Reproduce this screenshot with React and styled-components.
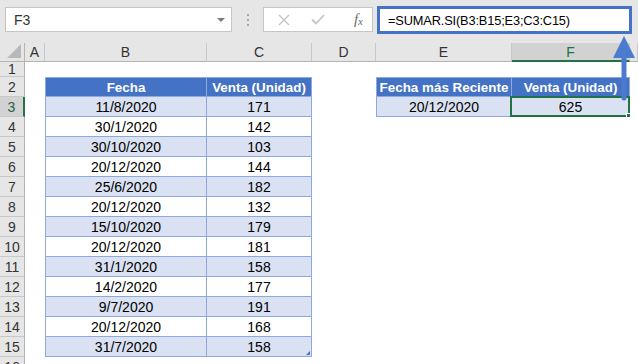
import React from 'react';
import styled, { createGlobalStyle } from 'styled-components';

const GlobalStyle = createGlobalStyle`
  html, body {
    margin: 0;
    padding: 0;
    background: #ffffff;
    overflow: hidden;
  }
  body {
    font-family: 'Liberation Sans', Arial, sans-serif;
    color: #000;
  }
`;

// the last column is only a sliver at the window edge, so it has no letter
const COLUMNS = ['A', 'B', 'C', 'D', 'E', 'F', ''];

const SALES = [
  ['11/8/2020', 171],
  ['30/1/2020', 142],
  ['30/10/2020', 103],
  ['20/12/2020', 144],
  ['25/6/2020', 182],
  ['20/12/2020', 132],
  ['15/10/2020', 179],
  ['20/12/2020', 181],
  ['31/1/2020', 158],
  ['14/2/2020', 177],
  ['9/7/2020', 191],
  ['20/12/2020', 168],
  ['31/7/2020', 158],
];

const App = () => {
  const rows = [];
  for (let r = 1; r <= 16; r++) rows.push(r);

  const renderCells = (r) => {
    // B/C table: header on row 2, data on rows 3..15
    let b = <Cell key="b" />;
    let c = <Cell key="c" />;
    if (r === 2) {
      b = <Cell key="b" $kind="head" $left $top>Fecha</Cell>;
      c = <Cell key="c" $kind="head" $top>Venta (Unidad)</Cell>;
    } else if (r >= 3 && r <= 15) {
      const [date, amount] = SALES[r - 3];
      const kind = (r - 3) % 2 === 0 ? 'band' : 'plain';
      b = <Cell key="b" $kind={kind} $left>{date}</Cell>;
      c = (
        <Cell key="c" $kind={kind} $resize={r === 15}>
          {amount}
        </Cell>
      );
    }

    let e = <Cell key="e" />;
    let f = <Cell key="f" />;
    if (r === 2) {
      e = <Cell key="e" $kind="head" $left $top>Fecha más Reciente</Cell>;
      f = <Cell key="f" $kind="head" $top>Venta (Unidad)</Cell>;
    } else if (r === 3) {
      e = <Cell key="e" $kind="band" $left>20/12/2020</Cell>;
      f = (
        <Cell key="f" $kind="band">
          625
          <Selection />
        </Cell>
      );
    }

    return [<Cell key="a" />, b, c, <Cell key="d" />, e, f, <Cell key="g" />];
  };

  return (
    <Page>
      <GlobalStyle />
      <Toolbar>
        <NameBox>
          <span>F3</span>
          <DropArrow />
        </NameBox>
        <Grip>
          <i />
          <i />
          <i />
        </Grip>
        <ActionBox>
          <ActionIcon>
            <svg width="12" height="12" viewBox="0 0 12 12">
              <path d="M1 1 L11 11 M11 1 L1 11" stroke="#c4c4c4" strokeWidth="1.4" fill="none" />
            </svg>
          </ActionIcon>
          <ActionIcon>
            <svg width="14" height="11" viewBox="0 0 14 11">
              <path d="M1 5.5 L5 9.5 L13 1" stroke="#c4c4c4" strokeWidth="1.8" fill="none" />
            </svg>
          </ActionIcon>
          <FxLabel>
            f<sub>x</sub>
          </FxLabel>
        </ActionBox>
        <FormulaBox>=SUMAR.SI(B3:B15;E3;C3:C15)</FormulaBox>
      </Toolbar>

      <Sheet>
        <Corner>
          <svg width="14" height="14" viewBox="0 0 14 14">
            <polygon points="14,0 14,14 0,14" fill="#b9b9b9" />
          </svg>
        </Corner>
        {COLUMNS.map((col, i) => (
          <ColHeader key={i} $active={col === 'F'}>
            {col}
          </ColHeader>
        ))}
        {rows.map((r) => (
          <React.Fragment key={r}>
            <RowHeader $active={r === 3}>{r}</RowHeader>
            {renderCells(r)}
          </React.Fragment>
        ))}
      </Sheet>

      <Annotation width="638" height="364" viewBox="0 0 638 364">
        <line x1="624" y1="56" x2="624" y2="98" stroke="#4a7bcf" strokeWidth="5" strokeLinecap="round" />
        <polygon points="613,58 624,36 635,58" fill="#4a7bcf" />
      </Annotation>
    </Page>
  );
};

export default App;

const Page = styled.div`
  position: relative;
  width: 638px;
  height: 364px;
  overflow: hidden;
  background: #ffffff;
`;

const Toolbar = styled.div`
  display: flex;
  align-items: flex-start;
  height: 43px;
  padding: 7px 0 0 5px;
  box-sizing: border-box;
  background: #e6e6e6;
`;

const NameBox = styled.div`
  display: flex;
  align-items: center;
  justify-content: space-between;
  width: 227px;
  height: 25px;
  box-sizing: border-box;
  padding: 0 6px 0 8px;
  background: #ffffff;
  border: 1px solid #c6c6c6;
  font-size: 14px;
  color: #333333;
`;

const DropArrow = styled.span`
  width: 0;
  height: 0;
  border-left: 4px solid transparent;
  border-right: 4px solid transparent;
  border-top: 4px solid #7a7a7a;
`;

const Grip = styled.div`
  display: flex;
  flex-direction: column;
  align-items: center;
  justify-content: center;
  gap: 3px;
  width: 31px;
  height: 25px;

  i {
    display: block;
    width: 2px;
    height: 2px;
    background: #a6a6a6;
  }
`;

const ActionBox = styled.div`
  display: grid;
  grid-template-columns: 40px 28px 1fr;
  align-items: center;
  width: 110px;
  height: 25px;
  box-sizing: border-box;
  background: #ffffff;
  border: 1px solid #c6c6c6;
`;

const ActionIcon = styled.span`
  display: flex;
  justify-content: center;
  align-items: center;
`;

const FxLabel = styled.span`
  justify-self: end;
  padding-right: 9px;
  font-family: 'Liberation Serif', 'Times New Roman', serif;
  font-style: italic;
  font-size: 15px;
  color: #6b6b6b;

  sub {
    font-size: 11px;
    vertical-align: -1px;
  }
`;

const FormulaBox = styled.div`
  display: flex;
  align-items: center;
  margin: -1px 0 0 4px;
  width: 255px;
  height: 28px;
  box-sizing: border-box;
  padding-left: 8px;
  background: #ffffff;
  border: 3px solid #4472c4;
  font-size: 12.8px;
  letter-spacing: -0.15px;
  color: #000000;
`;

const Sheet = styled.div`
  display: grid;
  grid-template-columns: 25px 20px 162px 105px 64px 136px 118px 1fr;
  grid-template-rows: 19px 15px repeat(15, 20px);
`;

const Corner = styled.div`
  display: flex;
  align-items: flex-end;
  justify-content: flex-end;
  padding: 0 3px 3px 0;
  background: #e6e6e6;
  border-right: 1px solid #b4b4b4;
  border-bottom: 1px solid #b4b4b4;
`;

const ColHeader = styled.div`
  display: flex;
  align-items: center;
  justify-content: center;
  font-size: 14px;
  background: ${(p) => (p.$active ? '#d2d2d2' : '#e6e6e6')};
  color: ${(p) => (p.$active ? '#217346' : '#333333')};
  border-right: 1px solid #c8c8c8;
  border-bottom: ${(p) => (p.$active ? '2px solid #217346' : '1px solid #b4b4b4')};
  box-sizing: border-box;
`;

const RowHeader = styled.div`
  display: flex;
  align-items: center;
  justify-content: center;
  font-size: 14px;
  background: ${(p) => (p.$active ? '#d2d2d2' : '#e6e6e6')};
  color: ${(p) => (p.$active ? '#2b5e4a' : '#333333')};
  border-bottom: 1px solid #c8c8c8;
  border-right: ${(p) => (p.$active ? '2px solid #217346' : '1px solid #b4b4b4')};
  box-sizing: border-box;
`;

const cellBackground = {
  head: '#4472c4',
  band: '#d9e1f2',
  plain: '#ffffff',
};

const Cell = styled.div`
  position: relative;
  display: flex;
  align-items: center;
  justify-content: center;
  box-sizing: border-box;
  white-space: nowrap;
  background: ${(p) => (p.$kind ? cellBackground[p.$kind] : '#ffffff')};
  color: ${(p) => (p.$kind === 'head' ? '#ffffff' : '#000000')};
  font-size: ${(p) => (p.$kind === 'head' ? '13.4px' : '14px')};
  font-weight: ${(p) => (p.$kind === 'head' ? 700 : 400)};
  border-right: ${(p) => (p.$kind ? '1px solid #8ea9db' : 'none')};
  border-bottom: ${(p) => (p.$kind ? '1px solid #8ea9db' : 'none')};
  border-left: ${(p) => (p.$left ? '1px solid #8ea9db' : 'none')};
  border-top: ${(p) => (p.$top ? '1px solid #8ea9db' : 'none')};

  &::after {
    content: '';
    display: ${(p) => (p.$resize ? 'block' : 'none')};
    position: absolute;
    right: 1px;
    bottom: 1px;
    width: 0;
    height: 0;
    border-left: 4px solid transparent;
    border-bottom: 4px solid #4472c4;
  }
`;

const Selection = styled.span`
  position: absolute;
  inset: -1px -1px -1px -2px;
  border: 2px solid #217346;
  pointer-events: none;

  &::after {
    content: '';
    position: absolute;
    right: -4px;
    bottom: -4px;
    width: 6px;
    height: 6px;
    background: #217346;
    border: 1px solid #ffffff;
    box-sizing: border-box;
  }
`;

const Annotation = styled.svg`
  position: absolute;
  left: 0;
  top: 0;
  pointer-events: none;
`;
